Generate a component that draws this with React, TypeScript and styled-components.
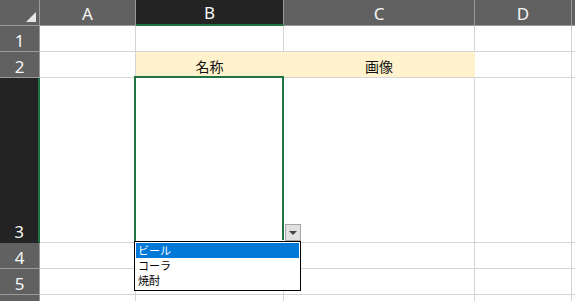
import styled, { createGlobalStyle } from "styled-components";

const GlobalStyle = createGlobalStyle`
  html, body {
    margin: 0;
    padding: 0;
    background: #ffffff;
    overflow: hidden;
  }
  * {
    box-sizing: border-box;
  }
`;

const COLS = ["A", "B", "C", "D", ""];
const COL_WIDTHS = [96, 148, 191, 97, 60];
const ROW_HEIGHTS = [26, 26, 165, 26, 26, 26];

const Sheet = styled.div`
  display: grid;
  grid-template-columns: 40px ${COL_WIDTHS.map((w) => `${w}px`).join(" ")};
  grid-template-rows: 26px ${ROW_HEIGHTS.map((h) => `${h}px`).join(" ")};
  width: 575px;
  height: 301px;
  overflow: hidden;
  font-family: "Noto Sans", "Noto Sans CJK JP", sans-serif;
`;

const Corner = styled.div`
  position: relative;
  background: #616161;
  border-right: 1px solid #9a9a9a;
  border-bottom: 1px solid #9a9a9a;

  &::after {
    content: "";
    position: absolute;
    right: 3px;
    bottom: 3px;
    width: 0;
    height: 0;
    border-left: 10px solid transparent;
    border-bottom: 10px solid #e8e8e8;
  }
`;

const ColHeader = styled.div<{ $active?: boolean }>`
  display: flex;
  align-items: flex-end;
  justify-content: center;
  padding-bottom: 1px;
  background: ${(p) => (p.$active ? "#232323" : "#616161")};
  color: #f6f6f6;
  font-size: 17px;
  line-height: 20px;
  border-right: 1px solid #9a9a9a;
  border-bottom: ${(p) => (p.$active ? "2px solid #217346" : "1px solid #9a9a9a")};
`;

const RowHeader = styled.div<{ $active?: boolean }>`
  display: flex;
  align-items: flex-end;
  justify-content: center;
  padding-bottom: 0;
  background: ${(p) => (p.$active ? "#232323" : "#616161")};
  color: #f6f6f6;
  font-size: 17px;
  line-height: 20px;
  border-right: ${(p) => (p.$active ? "2px solid #217346" : "1px solid #9a9a9a")};
  border-bottom: 1px solid ${(p) => (p.$active ? "#232323" : "#9a9a9a")};
`;

const Cell = styled.div<{ $fill?: string }>`
  position: relative;
  display: flex;
  align-items: flex-end;
  justify-content: center;
  padding-bottom: 2px;
  background: ${(p) => p.$fill ?? "#ffffff"};
  border-right: 1px solid ${(p) => (p.$fill ? p.$fill : "#d4d4d4")};
  border-bottom: 1px solid #d4d4d4;
  color: #111111;
  font-size: 14px;
  line-height: 18px;
  font-family: "Noto Sans CJK JP", sans-serif;
`;

const Selection = styled.div`
  position: absolute;
  left: -2px;
  top: -2px;
  right: -1px;
  bottom: -1px;
  border: 2px solid #217346;
  z-index: 2;
`;

const FillHandle = styled.div`
  position: absolute;
  right: -3px;
  bottom: -3px;
  width: 5px;
  height: 5px;
  background: #217346;
  border: 1px solid #ffffff;
  z-index: 3;
`;

const DropButton = styled.div`
  position: absolute;
  left: 149px;
  bottom: 1px;
  width: 16px;
  height: 17px;
  background: #e1e1e1;
  border: 1px solid #a6a6a6;
  display: flex;
  align-items: center;
  justify-content: center;
  z-index: 3;

  &::before {
    content: "";
    width: 0;
    height: 0;
    border-left: 4px solid transparent;
    border-right: 4px solid transparent;
    border-top: 4px solid #444444;
  }
`;

const List = styled.div`
  position: absolute;
  left: -2px;
  top: calc(100% - 1px);
  width: 167px;
  border: 1px solid #000000;
  background: #ffffff;
  padding: 1px 1px 2px 1px;
  display: flex;
  flex-direction: column;
  z-index: 4;
`;

const ListItem = styled.div<{ $selected?: boolean }>`
  height: 15px;
  line-height: 15px;
  padding-left: 2px;
  font-size: 11px;
  font-family: "Noto Sans CJK JP", sans-serif;
  color: ${(p) => (p.$selected ? "#ffffff" : "#000000")};
  background: ${(p) => (p.$selected ? "#0078d7" : "transparent")};
`;

const cellText: Record<string, string> = {
  "2-1": "名称",
  "2-2": "画像",
};

export default function App() {
  return (
    <>
      <GlobalStyle />
      <Sheet>
        <Corner />
        {COLS.map((c, i) => (
          <ColHeader key={`h${i}`} $active={c === "B"}>
            {c}
          </ColHeader>
        ))}
        {ROW_HEIGHTS.map((_, r) => {
          const row = r + 1;
          return [
            <RowHeader key={`r${row}`} $active={row === 3}>
              {row <= 5 ? row : ""}
            </RowHeader>,
            ...COLS.map((_c, ci) => {
              const key = `${row}-${ci}`;
              const fill = row === 2 && (ci === 1 || ci === 2) ? "#fff2cc" : undefined;
              if (row === 3 && ci === 1) {
                return (
                  <Cell key={key}>
                    <Selection />
                    <FillHandle />
                    <DropButton />
                    <List>
                      <ListItem $selected>ビール</ListItem>
                      <ListItem>コーラ</ListItem>
                      <ListItem>焼酎</ListItem>
                    </List>
                  </Cell>
                );
              }
              return (
                <Cell key={key} $fill={fill}>
                  {cellText[key]}
                </Cell>
              );
            }),
          ];
        })}
      </Sheet>
    </>
  );
}
